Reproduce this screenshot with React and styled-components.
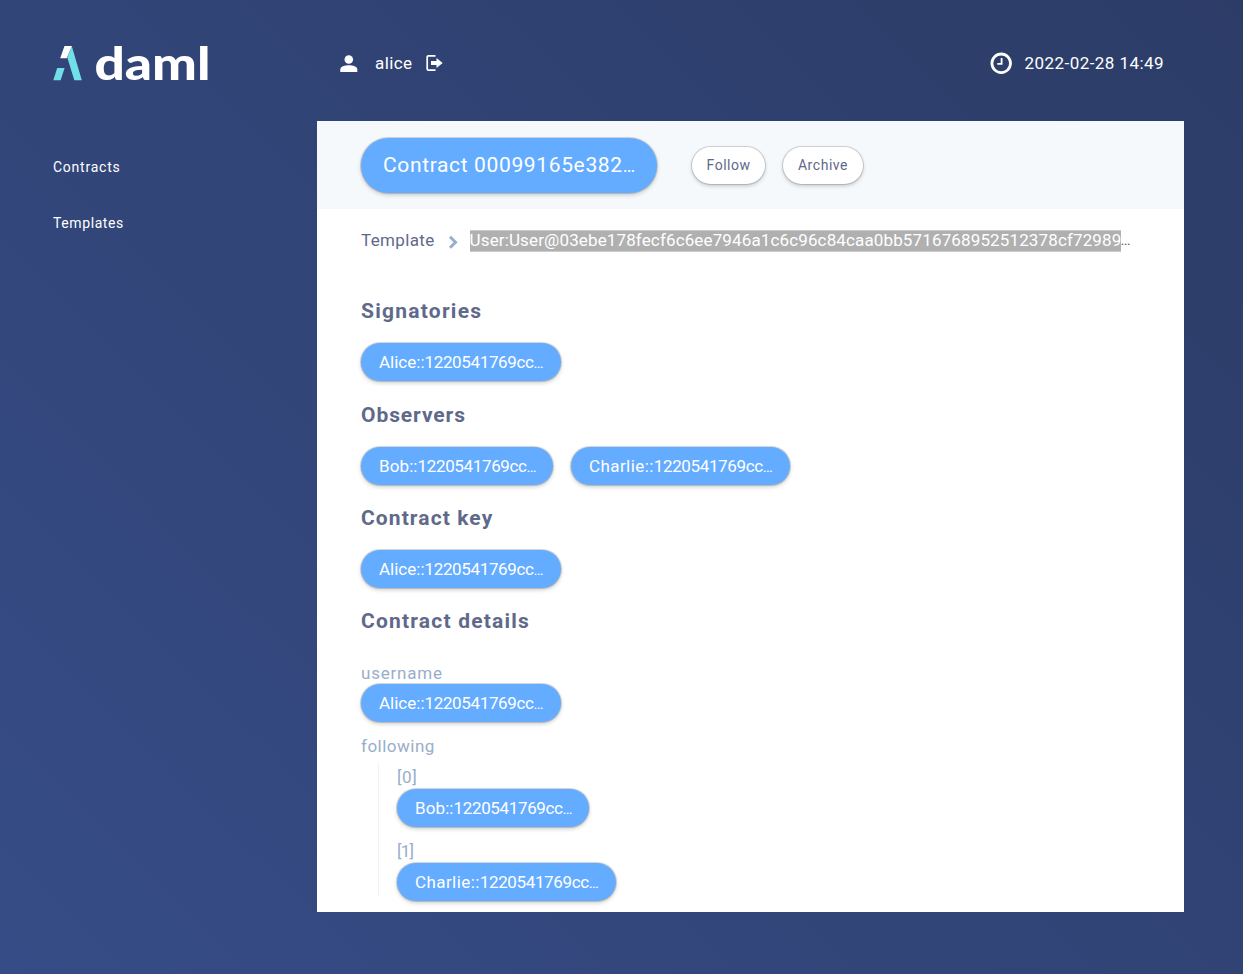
import React from "react";
import styled, { createGlobalStyle } from "styled-components";

const GlobalStyle = createGlobalStyle`
  html, body { margin: 0; height: 100%; overflow: hidden; }
  body { font-family: Roboto, "Liberation Sans", sans-serif; }
  * { box-sizing: border-box; }
`;

const Page = styled.div`
  width: 1243px;
  height: 974px;
  display: grid;
  grid-template: 121px 791px / 264px 867px;
  padding-left: 53px;
  background: linear-gradient(45deg, #364c86 0%, #2c3c67 100%);
  color: #fff;
`;
const Brand = styled.div`
  display: flex;
  padding-top: 35px;
`;
const TopBar = styled.header`
  display: flex;
  align-items: flex-start;
  justify-content: space-between;
  padding: 51px 20px 0 23px;
  font-size: 17px;
  line-height: 24px;
`;
const Group = styled.div`
  display: flex;
  align-items: center;
  height: 24px;
  gap: ${(p) => p.$gap}px;
`;
const Label = styled.span`
  display: inline-block;
  letter-spacing: ${(p) => p.$track || 0}px;
  white-space: nowrap;
`;
const Nav = styled.nav`
  display: flex;
  flex-direction: column;
  gap: 32px;
  padding-top: 34px;
`;
const NavLink = styled.a`
  font-size: 14px;
  line-height: 24px;
  letter-spacing: ${(p) => p.$track}px;
`;
const Panel = styled.main`
  background: #fff;
  color: #5f698a;
  overflow: hidden;
`;
const PanelHeader = styled.div`
  display: flex;
  align-items: center;
  height: 88px;
  padding-left: 44px;
  background: #f5f9fc;
`;
const raised = `
  box-shadow: 0 0 0 1px rgba(0, 0, 0, 0.14), 0 2px 4px rgba(0, 0, 0, 0.2);
`;
const Title = styled.h1`
  width: 296px;
  height: 55px;
  margin: 0 35px 0 0;
  padding-left: 22px;
  border-radius: 28px;
  background: #64acff;
  color: #fff;
  font-size: 21px;
  font-weight: 400;
  line-height: 54px;
  white-space: nowrap;
  ${raised}
`;
const Button = styled.button`
  width: ${(p) => p.$width}px;
  height: 37px;
  margin-right: 18px;
  padding: 0;
  border: 0;
  border-radius: 19px;
  background: #fff;
  color: #5f698a;
  font: 14px/36px Roboto, sans-serif;
  ${raised}
`;
const Body = styled.div`
  padding: 19px 44px 0;
`;
const TemplateRow = styled.div`
  display: flex;
  align-items: center;
  height: 24px;
  font-size: 17px;
  line-height: 24px;
  svg { margin: 4px 12px 0 13px; }
`;
const Selected = styled.span`
  width: 651px;
  height: 22px;
  margin-top: 1px;
  border: solid #cbcbcb;
  border-width: 1px 0;
  background: #b0b0b0;
  color: #fff;
  line-height: 19px;
  letter-spacing: ${(p) => p.$track}px;
  white-space: nowrap;
`;
const Section = styled.section`
  height: ${(p) => p.$height}px;
  &:first-of-type { margin-top: 43px; }
`;
const Heading = styled.h2`
  margin: 0;
  height: ${(p) => p.$height || 48}px;
  font-size: 21px;
  font-weight: 700;
  line-height: 32px;
  letter-spacing: ${(p) => p.$track}px;
`;
const Pills = styled.div`
  display: flex;
  gap: 18px;
`;
const PillBox = styled.div`
  width: ${(p) => p.$width}px;
  height: 38px;
  padding-left: 18px;
  border-radius: 19px;
  background: #64acff;
  color: #fff;
  font-size: 17px;
  line-height: 38px;
  white-space: nowrap;
  ${raised}
`;
const Dots = styled.span`
  font-size: 0.88em;
`;
const Field = styled.div`
  color: #98aeca;
  font-size: 17px;
  line-height: 24px;
  height: ${(p) => p.$height}px;
`;
const FieldName = styled.div`
  height: ${(p) => p.$height || 23}px;
  letter-spacing: ${(p) => p.$track || 0}px;
`;
const List = styled.div`
  margin-left: 17px;
  padding: 2px 0 0 18px;
  height: 134px;
  border-left: 1px solid #f0f3fa;
`;

const parties = {
  Alice: { width: 200, track: 0 },
  Bob: { width: 192, track: 0.1 },
  Charlie: { width: 219, track: 0.42 },
};

const Party = ({ name }) => (
  <PillBox $width={parties[name].width}>
    <Label $track={parties[name].track}>{name}::</Label>
    <Label $track={-0.36}>1220541769cc</Label>
    <Dots>…</Dots>
  </PillBox>
);

const Logo = () => (
  <svg width="180" height="64" viewBox="0 -10 180 64" role="img" aria-label="daml">
    <path d="M11.5 1H19L13.7 13.3H7.2Z" fill="#fff" />
    <path d="M18.8 1.2L28.8 35.3H21.3L14.3 12.4Z" fill="#70dfe8" />
    <path d="M4.2 23H11.6L7.6 35.3H.3Z" fill="#70dfe8" />
    <text x="41.5" y="35.3" fill="#fff" fontFamily="Lato" fontWeight="900" fontSize="46" textLength="116" lengthAdjust="spacingAndGlyphs">daml</text>
  </svg>
);
const UserIcon = () => (
  <svg width="18" height="20" viewBox="0 0 18 20" fill="#fff">
    <circle cx="8.8" cy="6.5" r="4.3" />
    <path d="M.3 19V16.5C.3 13.5 4.8 12.3 8.8 12.3S17.3 13.5 17.3 16.5V19Z" />
  </svg>
);
const ExitIcon = () => (
  <svg width="17" height="18" viewBox="0 0 17 18" fill="none">
    <path d="M9.5 1.8H2.5Q1.2 1.8 1.2 3V15Q1.2 16.2 2.5 16.2H9.5" stroke="#fff" strokeWidth="1.7" />
    <path d="M5 7H10.5V4L16.7 9L10.5 14V11H5Z" fill="#fff" />
  </svg>
);
const ClockIcon = () => (
  <svg width="22" height="22" viewBox="0 0 22 22" fill="none" stroke="#fff">
    <circle cx="11.2" cy="11.3" r="9.3" strokeWidth="2.8" />
    <path d="M11.6 6V11.8H7.3" strokeWidth="1.8" />
  </svg>
);
const Chevron = () => (
  <svg width="10" height="14" viewBox="0 0 10 14" fill="none">
    <path d="M2 1.7L7.5 7.2L2 12.7" stroke="#98aeca" strokeWidth="3" />
  </svg>
);

export default function App() {
  return (
    <>
      <GlobalStyle />
      <Page>
        <Brand><Logo /></Brand>
        <TopBar>
          <Group $gap={14}>
            <Group $gap={17}><UserIcon /><Label $track={0.4}>alice</Label></Group>
            <ExitIcon />
          </Group>
          <Group $gap={13}><ClockIcon /><Label $track={0.44}>2022-02-28 14:49</Label></Group>
        </TopBar>
        <Nav>
          <NavLink $track={0.76}>Contracts</NavLink>
          <NavLink $track={0.6}>Templates</NavLink>
        </Nav>
        <Panel>
          <PanelHeader>
            <Title><Label $track={0.64}>Contract 00099165e382</Label><Dots>…</Dots></Title>
            <Button $width={73}><Label $track={0.5}>Follow</Label></Button>
            <Button $width={80}><Label $track={0.55}>Archive</Label></Button>
          </PanelHeader>
          <Body>
            <TemplateRow>
              <Label $track={0.35}>Template</Label>
              <Chevron />
              <Selected $track={0.135}>User:User@03ebe178fecf6c6ee7946a1c6c96c84caa0bb5716768952512378cf72989</Selected>
              <Dots>…</Dots>
            </TemplateRow>
            <Section $height={104}>
              <Heading $track={1.25}>Signatories</Heading>
              <Pills><Party name="Alice" /></Pills>
            </Section>
            <Section $height={103}>
              <Heading $track={0.92}>Observers</Heading>
              <Pills><Party name="Bob" /><Party name="Charlie" /></Pills>
            </Section>
            <Section $height={103}>
              <Heading $track={1.1}>Contract key</Heading>
              <Pills><Party name="Alice" /></Pills>
            </Section>
            <Heading $height={56} $track={1.2}>Contract details</Heading>
            <Field $height={73}>
              <FieldName $track={0.8}>username</FieldName>
              <Party name="Alice" />
            </Field>
            <Field>
              <FieldName $track={0.5} $height={29}>following</FieldName>
              <List>
                <Field $height={74}><FieldName $height={24} $track={0.6}>[0]</FieldName><Party name="Bob" /></Field>
                <Field $height={74}><FieldName $height={24} $track={-0.8}>[1]</FieldName><Party name="Charlie" /></Field>
              </List>
            </Field>
          </Body>
        </Panel>
      </Page>
    </>
  );
}
